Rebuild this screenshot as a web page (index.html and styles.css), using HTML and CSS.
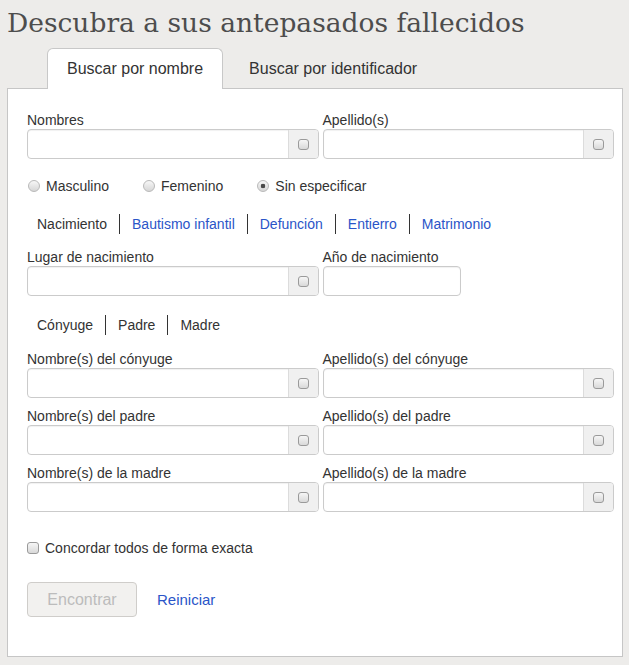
FILE: index.html
```html
<!DOCTYPE html>
<html lang="es">
<head>
<meta charset="utf-8">
<title>Descubra a sus antepasados fallecidos</title>
<link rel="stylesheet" href="styles.css">
</head>
<body>
<div class="page">
  <h1 class="title">Descubra a sus antepasados fallecidos</h1>
  <div class="tabs">
    <div class="tab active">Buscar por nombre</div>
    <div class="tab">Buscar por identificador</div>
  </div>
  <div class="panel">
    <div class="grid2">
      <div class="field">
        <div class="label">Nombres</div>
        <div class="input-group"><div class="fill"></div><div class="addon"><span class="box"></span></div></div>
      </div>
      <div class="field">
        <div class="label">Apellido(s)</div>
        <div class="input-group"><div class="fill"></div><div class="addon"><span class="box"></span></div></div>
      </div>
    </div>

    <div class="radios">
      <div class="radio"><span class="dot"></span>Masculino</div>
      <div class="radio"><span class="dot"></span>Femenino</div>
      <div class="radio"><span class="dot on"></span>Sin especificar</div>
    </div>

    <div class="subtabs events">
      <div class="subtab current">Nacimiento</div>
      <div class="subtab link">Bautismo infantil</div>
      <div class="subtab link">Defunción</div>
      <div class="subtab link">Entierro</div>
      <div class="subtab link">Matrimonio</div>
    </div>

    <div class="grid2 event-row">
      <div class="field">
        <div class="label">Lugar de nacimiento</div>
        <div class="input-group"><div class="fill"></div><div class="addon"><span class="box"></span></div></div>
      </div>
      <div class="field">
        <div class="label">Año de nacimiento</div>
        <div class="input-group year"><div class="fill"></div></div>
      </div>
    </div>

    <div class="subtabs relatives">
      <div class="subtab current">Cónyuge</div>
      <div class="subtab current">Padre</div>
      <div class="subtab current">Madre</div>
    </div>

    <div class="grid2 rel-row first">
      <div class="field">
        <div class="label">Nombre(s) del cónyuge</div>
        <div class="input-group"><div class="fill"></div><div class="addon"><span class="box"></span></div></div>
      </div>
      <div class="field">
        <div class="label">Apellido(s) del cónyuge</div>
        <div class="input-group"><div class="fill"></div><div class="addon"><span class="box"></span></div></div>
      </div>
    </div>
    <div class="grid2 rel-row">
      <div class="field">
        <div class="label">Nombre(s) del padre</div>
        <div class="input-group"><div class="fill"></div><div class="addon"><span class="box"></span></div></div>
      </div>
      <div class="field">
        <div class="label">Apellido(s) del padre</div>
        <div class="input-group"><div class="fill"></div><div class="addon"><span class="box"></span></div></div>
      </div>
    </div>
    <div class="grid2 rel-row">
      <div class="field">
        <div class="label">Nombre(s) de la madre</div>
        <div class="input-group"><div class="fill"></div><div class="addon"><span class="box"></span></div></div>
      </div>
      <div class="field">
        <div class="label">Apellido(s) de la madre</div>
        <div class="input-group"><div class="fill"></div><div class="addon"><span class="box"></span></div></div>
      </div>
    </div>

    <div class="exact"><span class="check"></span>Concordar todos de forma exacta</div>

    <div class="actions">
      <div class="btn disabled">Encontrar</div>
      <a class="reset">Reiniciar</a>
    </div>
  </div>
</div>
</body>
</html>
```

FILE: styles.css
```css
html, body {
  margin: 0;
  padding: 0;
}
body {
  background: #edecea;
  font-family: "Liberation Sans", Arial, sans-serif;
  font-size: 14px;
  color: #333;
}
.page {
  padding: 0 6px 8px 7px;
}
.title {
  margin: 0;
  padding-top: 3px;
  height: 40px;
  font-family: "DejaVu Serif", serif;
  font-weight: normal;
  font-size: 26.5px;
  line-height: 40px;
  color: #4d4d4d;
  white-space: nowrap;
}
.tabs {
  display: flex;
  height: 40px;
  margin-top: 5px;
  padding-left: 40px;
}
.tab {
  display: flex;
  align-items: center;
  padding: 0 19px;
  margin-right: 6px;
  border: 1px solid transparent;
  border-bottom: none;
  border-radius: 6px 6px 0 0;
  font-size: 16px;
  color: #333;
}
.tab.active {
  position: relative;
  z-index: 1;
  background: #fff;
  border-color: #c8c8c8;
  margin-bottom: -1px;
}
.panel {
  background: #fff;
  border: 1px solid #c6c6c6;
  padding: 23px 8px 39px 19px;
}
.grid2 {
  display: grid;
  grid-template-columns: 1fr 1fr;
  column-gap: 4px;
}
.label {
  line-height: 17px;
  font-size: 14px;
  color: #333;
  white-space: nowrap;
}
.input-group {
  display: flex;
  height: 28px;
  border: 1px solid #cbcbcb;
  border-radius: 4px;
  overflow: hidden;
  background: #fff;
  box-shadow: inset 0 1px 1px rgba(0, 0, 0, 0.06);
}
.input-group.year {
  width: 136px;
}
.fill {
  flex: 1;
}
.addon {
  width: 29px;
  border-left: 1px solid #dcdcdc;
  background: #f0f0f0;
  display: flex;
  align-items: center;
  justify-content: center;
}
.box {
  width: 9px;
  height: 9px;
  border: 1px solid #9a9a9a;
  border-radius: 3px;
  background: linear-gradient(#f6f6f6, #d9d9d9);
}
.radios {
  display: flex;
  align-items: center;
  height: 18px;
  margin-top: 18px;
  padding-left: 1px;
}
.radio {
  display: flex;
  align-items: center;
  gap: 6px;
  margin-right: 34px;
  color: #333;
}
.dot {
  width: 10px;
  height: 10px;
  border-radius: 50%;
  border: 1px solid #b9b9b9;
  background: linear-gradient(#f7f7f7, #d6d6d6);
}
.dot.on {
  background: radial-gradient(circle, #4a4a4a 0 2px, transparent 2.6px), linear-gradient(#f7f7f7, #d6d6d6);
}
.subtabs {
  display: flex;
  height: 20px;
  margin-left: -2px;
}
.subtab {
  display: flex;
  align-items: center;
  padding: 0 12px;
  color: #333;
}
.subtab + .subtab {
  border-left: 1px solid #333;
}
.subtab.link {
  color: #2a55c8;
}
.events {
  margin-top: 19px;
}
.event-row {
  margin-top: 15px;
}
.relatives {
  margin-top: 19px;
}
.rel-row {
  margin-top: 10px;
}
.rel-row.first {
  margin-top: 16px;
}
.exact {
  display: flex;
  align-items: center;
  gap: 6px;
  height: 18px;
  margin-top: 27px;
  color: #333;
}
.check {
  width: 10px;
  height: 10px;
  border: 1px solid #9a9a9a;
  border-radius: 3px;
  background: linear-gradient(#f6f6f6, #d9d9d9);
}
.actions {
  display: flex;
  align-items: center;
  gap: 20px;
  margin-top: 25px;
}
.btn {
  width: 108px;
  height: 33px;
  display: flex;
  align-items: center;
  justify-content: center;
  border: 1px solid #cfcdca;
  border-radius: 4px;
  font-size: 16px;
}
.btn.disabled {
  background: #f2f1ef;
  color: #bcbcbc;
}
.reset {
  font-size: 15px;
  color: #2a55c8;
}
```
